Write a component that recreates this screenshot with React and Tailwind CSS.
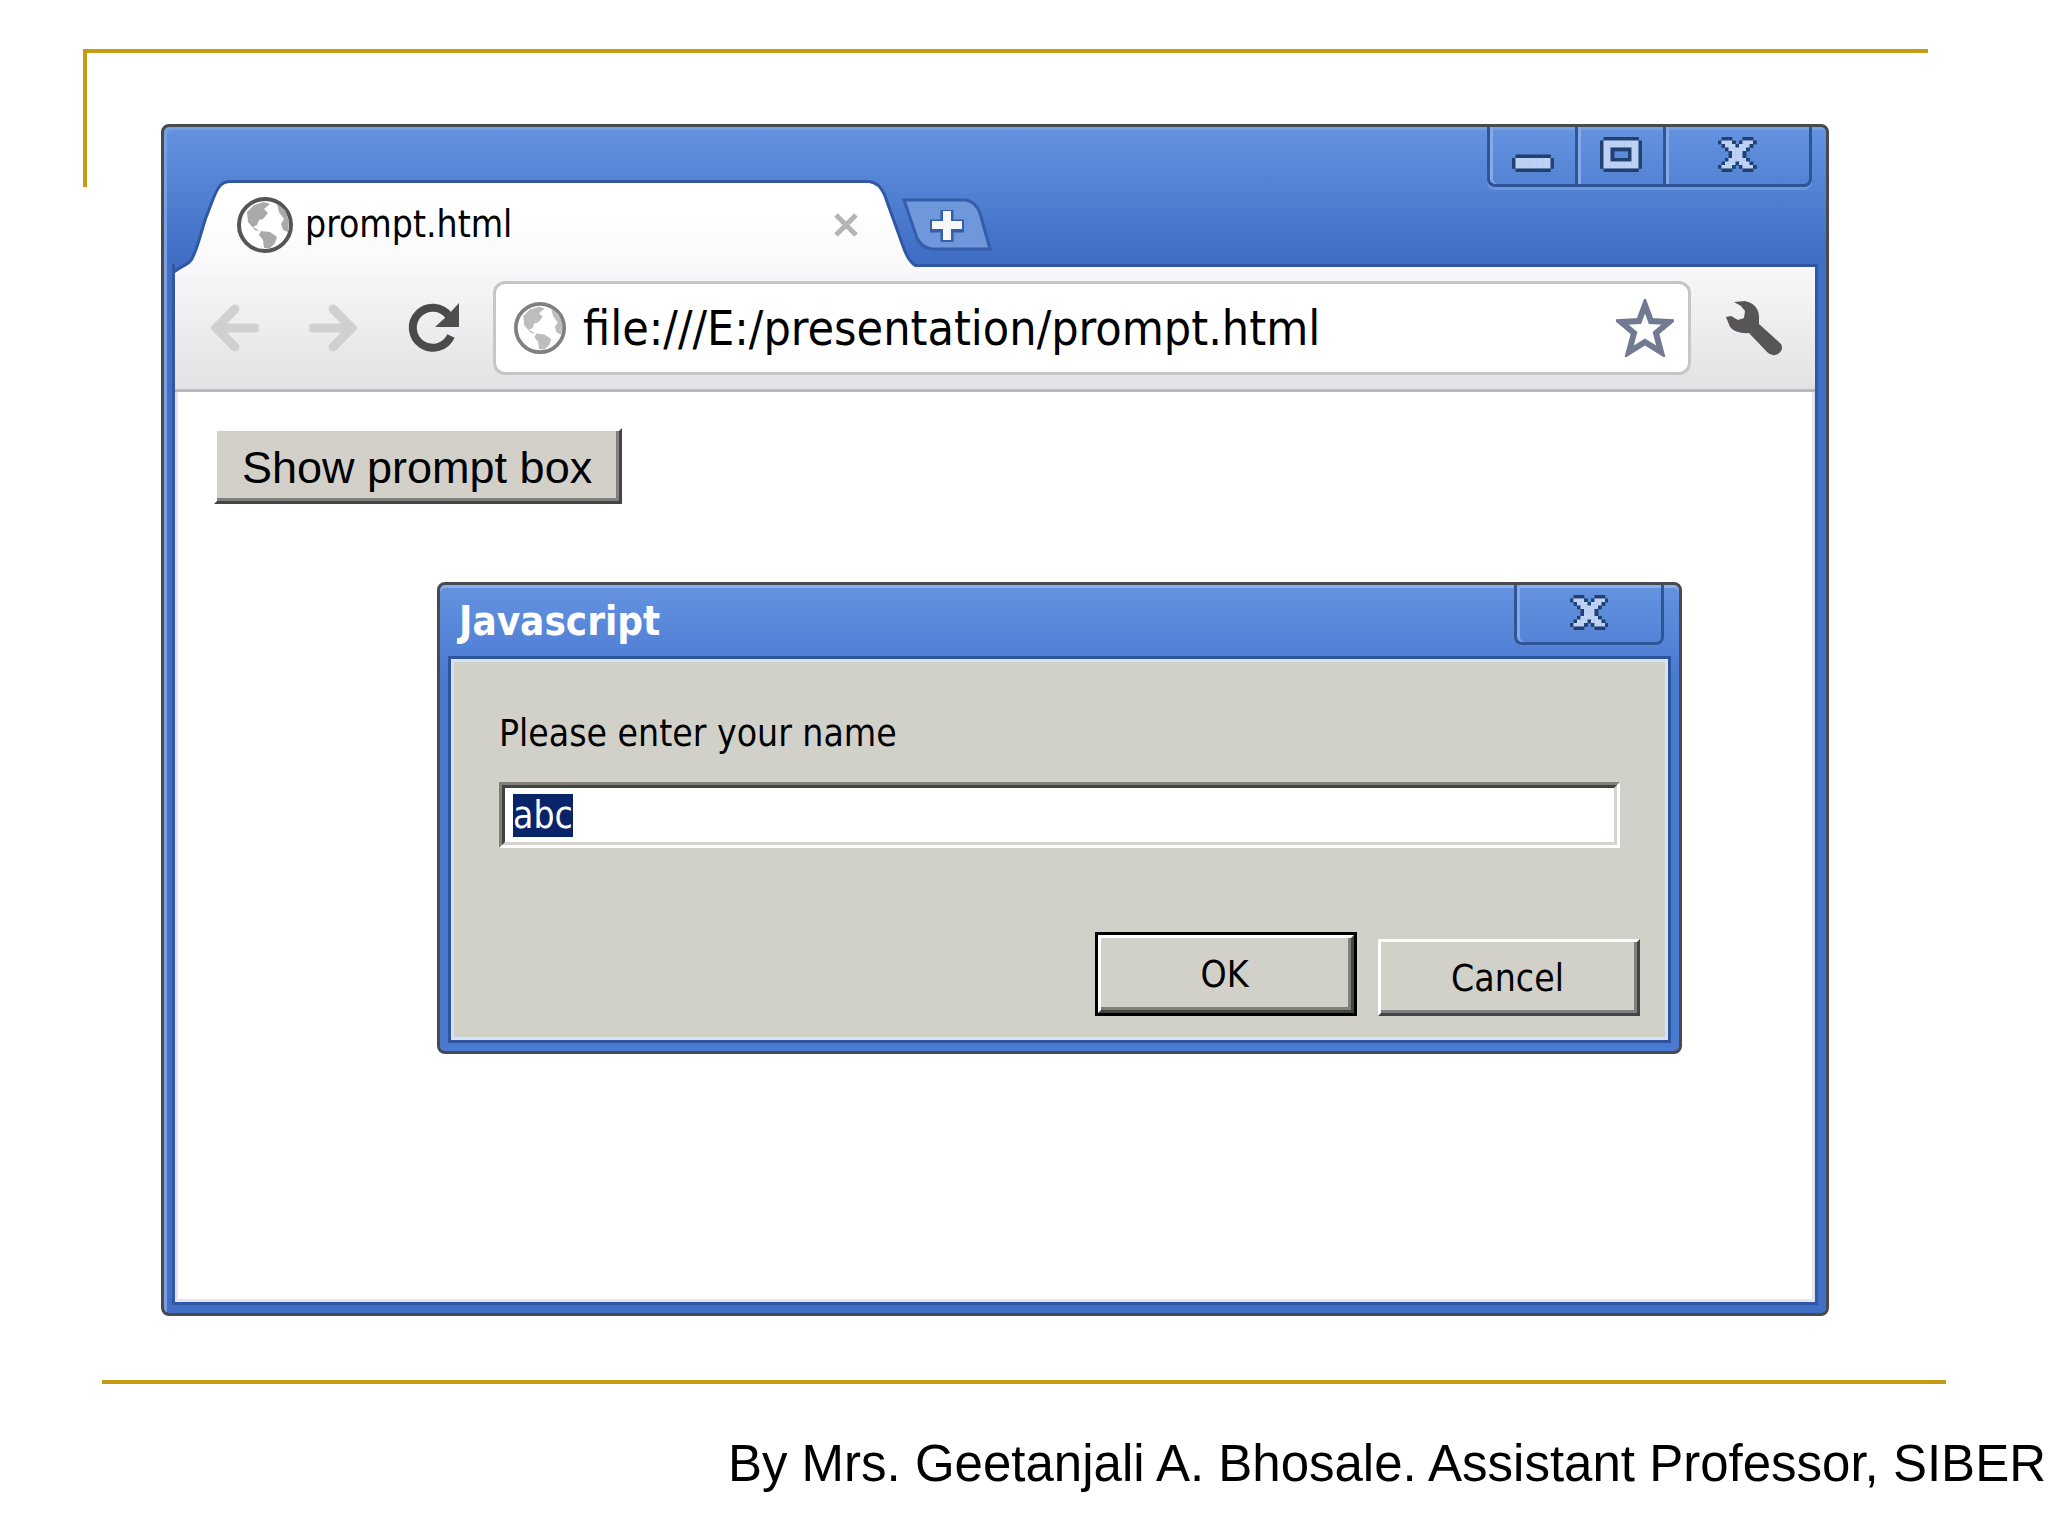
import { useEffect, useRef } from "react";

const CROSS = [
  ".###...###.",
  "#ooo#.#ooo#",
  ".#ooo#ooo#.",
  "..#ooooo#..",
  "...#ooo#...",
  "...#ooo#...",
  "..#ooooo#..",
  ".#ooo#ooo#.",
  "#ooo#.#ooo#",
  ".###...###.",
];

const MINIMIZE = [
  "............",
  "............",
  "............",
  "............",
  "............",
  ".##########.",
  "#oooooooooo#",
  "#oooooooooo#",
  "#oooooooooo#",
  ".##########.",
];

const MAXIMIZE = [
  ".##########.",
  "#oooooooooo#",
  "#oooooooooo#",
  "#oo######oo#",
  "#oo#....#oo#",
  "#oo#....#oo#",
  "#oo######oo#",
  "#oooooooooo#",
  "#oooooooooo#",
  ".##########.",
];

// cells overlap a little so that no seams show between them
const PixelGlyph = ({ rows }) => (
  <svg className="h-[35px]" viewBox={`0 0 ${rows[0].length} ${rows.length}`} aria-hidden="true">
    {rows.flatMap((row, y) =>
      [...row].map((cell, x) =>
        cell === "." ? null : (
          <rect key={`${x}-${y}`} x={x} y={y} width="1.1" height="1.1" fill={cell === "#" ? "#20406f" : "#bdd2f5"} />
        )
      )
    )}
  </svg>
);

const Globe = ({ className, ring, land }) => (
  <svg className={className} viewBox="0 0 56 56" aria-hidden="true">
    <circle cx="28" cy="28" r="26" fill="#fff" stroke={ring} strokeWidth="4" />
    <path
      d="M10 15 L17 8 L27 5 L33 7 L27 12 L31 16 L26 22 L22 23 L20 28 L16 30 L23 34 L18 33 L11 25 Z"
      fill={land}
    />
    <path d="M24 34 L33 35 L40 40 L38 46 L33 51 L27 51 L26 43 L22 38 Z" fill={land} />
    <path d="M40 7 L48 13 L52 24 L51 35 L46 33 L44 27 L47 22 L42 15 Z" fill={land} />
  </svg>
);

const Arrow = ({ flip }) => (
  <svg className={flip ? "h-12 w-12 -scale-x-100" : "h-12 w-12"} viewBox="0 0 48 48" aria-hidden="true">
    <path d="M24 5 L5 24 L24 43 M6 24 H44" fill="none" stroke="#d0d0d2" strokeWidth="9" strokeLinecap="round" />
  </svg>
);

const TitleButton = ({ label, rows, className }) => (
  <button
    type="button"
    aria-label={label}
    className={`flex items-start justify-center border-[#2f5597] pt-2.5 shadow-[inset_3px_0_#86aae8] ${className}`}
  >
    <PixelGlyph rows={rows} />
  </button>
);

const Tab = () => (
  <div className="relative z-10 flex h-[84px] w-[737px] items-center pr-[53px] pl-[62px]">
    <svg className="absolute -top-1 left-0 h-[96px] w-[741px]" viewBox="0 0 741 96" aria-hidden="true">
      <defs>
        <linearGradient id="tab-fill" x1="0" y1="0" x2="0" y2="1">
          <stop offset="0.3" stopColor="#ffffff" />
          <stop offset="1" stopColor="#f8f8fa" />
        </linearGradient>
      </defs>
      <path d="M0 82 H20 L0 94 Z" fill="#426dc6" />
      <path
        d="M0 94 C8 88 14 87 18 81 C24 70 28 52 32 40 C37 28 41 14 46 8 Q49 4 56 4 H694 Q703 5 708 16 L726 66 Q732 84 740 88"
        fill="none"
        stroke="#2f57a4"
        strokeWidth="6"
      />
      <path
        d="M0 94 C8 88 14 87 18 81 C24 70 28 52 32 40 C37 28 41 14 46 8 Q49 4 56 4 H694 Q703 5 708 16 L726 66 Q732 84 740 88 V96 H0 Z"
        fill="url(#tab-fill)"
      />
    </svg>
    <Globe className="relative h-14 w-14" ring="#555555" land="#a9a9a9" />
    <span className="relative ml-3 flex-1 text-[37px] leading-[44px]">prompt.html</span>
    <button type="button" aria-label="Close tab" className="relative">
      <svg className="h-[26px] w-[26px]" viewBox="0 0 26 26" aria-hidden="true">
        <path d="M3 3 L23 23 M23 3 L3 23" stroke="#b4b4b4" strokeWidth="5" />
      </svg>
    </button>
  </div>
);

const Toolbar = () => (
  <div className="flex items-center border-b-3 border-[#b9b8bb] bg-linear-to-b from-[#f8f8fa] to-[#e2e1e4] pt-3.5 pr-8 pb-3.5 pl-9">
    <div className="flex items-center gap-[50px]">
      <button type="button" aria-label="Back">
        <Arrow />
      </button>
      <button type="button" aria-label="Forward">
        <Arrow flip />
      </button>
      <button type="button" aria-label="Reload">
        <svg className="h-[54px] w-[54px]" viewBox="0 0 54 54" aria-hidden="true">
          <path d="M44 35 A20 20 0 1 1 42 15" fill="none" stroke="#4a4a4a" strokeWidth="8" />
          <path d="M52 2 V26 H28 L40 15 Z" fill="#4f4f4f" />
        </svg>
      </button>
    </div>
    <div className="ml-8 flex h-[94px] flex-1 items-center rounded-xl border-3 border-[#c6c5c8] bg-white pr-3.5 pl-[18px]">
      <Globe className="h-[52px] w-[52px]" ring="#808080" land="#bdbdbd" />
      <input
        type="text"
        aria-label="Address"
        defaultValue="file:///E:/presentation/prompt.html"
        className="ml-[17px] min-w-0 flex-1 text-[48px] leading-[60px] outline-none"
      />
      <button type="button" aria-label="Bookmark this page">
        <svg className="h-[58px] w-[58px]" viewBox="0 0 58 58" aria-hidden="true">
          <path
            d="M29 6 L35 22 L53 23 L40 34 L45 53 L29 43 L13 53 L18 34 L5 23 L23 22 Z"
            fill="#fff"
            stroke="#707a90"
            strokeWidth="6"
          />
        </svg>
      </button>
    </div>
    <button type="button" aria-label="Customize and control" className="ml-[34px]">
      <svg className="h-[56px] w-[58px]" viewBox="0 0 58 56" aria-hidden="true">
        <path
          d="M9 2 L20 1 Q33 4 34 16 L34 24 L56 44 Q59 50 53 54 Q47 57 42 52 L24 33 Q11 34 5 27 L1 17 L6 16 L13 20 L19 18 L20 11 L16 6 Z"
          fill="#575556"
        />
      </svg>
    </button>
  </div>
);

const PromptDialog = () => {
  const nameInput = useRef(null);

  useEffect(() => {
    nameInput.current?.focus();
    nameInput.current?.select();
  }, []);

  return (
    <section
      role="dialog"
      aria-labelledby="prompt-title"
      className="mt-[78px] mr-[130px] ml-[259px] rounded-lg border-3 border-[#474b50] bg-[#416fc6] bg-linear-to-b from-[#6593e0] to-[#4a79d2] to-20% px-[11px] pb-[11px] shadow-[inset_0_3px_#8badea]"
    >
      <header className="flex h-[74px] items-start justify-between">
        <h2 id="prompt-title" className="pt-3 pl-2 text-[40px] leading-[48px] font-bold text-white">
          Javascript
        </h2>
        <TitleButton
          label="Close dialog"
          rows={CROSS}
          className="mr-1 h-[60px] w-[150px] rounded-b-lg border-x-3 border-b-3"
        />
      </header>
      <form
        className="border-3 border-[#d3e3fb] bg-[#d2d1c9] pt-[50px] pr-[25px] pb-[21px] pl-[45px] shadow-[0_0_0_3px_#2d549c]"
        onSubmit={(event) => event.preventDefault()}
      >
        <label htmlFor="name" className="block text-[37px] leading-[44px]">
          Please enter your name
        </label>
        <div className="mt-[26px] mr-5 border-3 border-t-[#808078] border-r-white border-b-white border-l-[#808078]">
          <input
            ref={nameInput}
            id="name"
            type="text"
            defaultValue="abc"
            className="block h-[60px] w-full border-3 border-t-[#434341] border-r-[#d5d4cf] border-b-[#d5d4cf] border-l-[#434341] bg-white px-2 text-[37px] leading-[46px] outline-none selection:bg-[#0a246a] selection:text-white"
          />
        </div>
        <div className="mt-[84px] flex items-end justify-end gap-[21px]">
          <button type="submit" className="w-[262px] border-3 border-black text-[37px] leading-[44px]">
            <span className="block border-3 border-t-white border-r-[#444440] border-b-[#444440] border-l-white">
              <span className="block border-r-3 border-b-3 border-[#808078] pt-[15px] pb-2.5">OK</span>
            </span>
          </button>
          <button
            type="button"
            className="w-[262px] border-3 border-t-white border-r-[#444444] border-b-[#444444] border-l-white text-[37px] leading-[44px]"
          >
            <span className="block border-r-3 border-b-3 border-[#808080] pt-[15px] pb-[9px]">Cancel</span>
          </button>
        </div>
      </form>
    </section>
  );
};

const BrowserWindow = () => (
  <section className="relative -mt-[63px] mr-[219px] ml-[161px] rounded-lg border-3 border-[#474b50] bg-[#416fc6] bg-linear-to-b from-[#6593e0] to-[#416fc6] to-[126px] px-[11px] pb-[11px] shadow-[inset_3px_3px_#7a9fe0]">
    <header className="flex h-[140px] items-start justify-between">
      <div className="flex items-start self-end">
        <Tab />
        <button type="button" aria-label="New tab" className="-ml-3 pt-3">
          <svg className="h-[60px] w-[94px]" viewBox="-4 -4 94 60" aria-hidden="true">
            <path
              d="M0 1 H62 Q72 3 76 14 L86 50 H28 Q18 49 13 39 Z"
              fill="#6f97dc"
              stroke="#345ea9"
              strokeWidth="3"
            />
            <path d="M43 11 V43 M26 27 H60" stroke="#345ea9" strokeWidth="13" />
            <path d="M43 12 V41 M28 26 H58" stroke="#f7f7f7" strokeWidth="8" />
          </svg>
        </button>
      </div>
      <div className="mr-[3px] flex h-[60px] rounded-b-lg shadow-[0_3px_#6d96e0]">
        <TitleButton label="Minimize" rows={MINIMIZE} className="w-[88px] rounded-bl-lg border-b-3 border-l-3" />
        <TitleButton label="Maximize" rows={MAXIMIZE} className="w-[88px] border-b-3 border-l-3" />
        <TitleButton label="Close window" rows={CROSS} className="w-[149px] rounded-br-lg border-x-3 border-b-3" />
      </div>
    </header>
    <div className="shadow-[0_0_0_3px_#2f57a4]">
      <Toolbar />
      <div className="border-x-3 border-b-3 border-[#e2e3ec] bg-white pt-9 pb-[245px]">
        <button
          type="button"
          className="ml-9 border-3 border-t-white border-r-[#444444] border-b-[#444444] border-l-white font-['Liberation_Sans',Arial,sans-serif] text-[45px] leading-[52px]"
        >
          <span className="block border-r-3 border-b-3 border-[#808080] bg-[#d3d0ca] pt-[11px] pr-6 pb-1 pl-[25px]">
            Show prompt box
          </span>
        </button>
        <PromptDialog />
      </div>
    </div>
  </section>
);

export default function App() {
  return (
    <main className="min-h-screen overflow-hidden bg-white pt-[49px] font-['DejaVu_Sans_Condensed','DejaVu_Sans',sans-serif] text-black">
      <div className="mr-[120px] ml-[83px] h-[138px] border-t-4 border-l-4 border-[#c59b12]" />
      <BrowserWindow />
      <footer>
        <hr className="mx-[102px] mt-[64px] border-t-4 border-[#c59b12]" />
        <p className="mt-[50px] pr-0.5 text-right font-['Liberation_Sans',Arial,sans-serif] text-[51px] leading-[60px] whitespace-nowrap">
          By Mrs. Geetanjali A. Bhosale. Assistant Professor, SIBER
        </p>
      </footer>
    </main>
  );
}
